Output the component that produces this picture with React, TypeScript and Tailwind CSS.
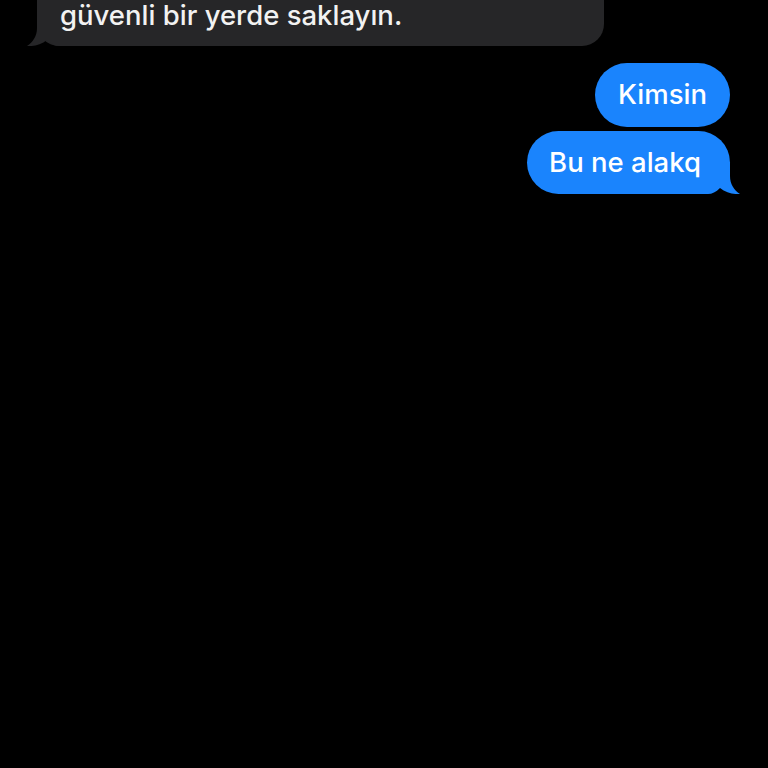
const font = { fontFamily: "Inter, 'Noto Sans', sans-serif" };

function Tail({ side, color }: { side: "left" | "right"; color: string }) {
  if (side === "left") {
    return (
      <svg className="absolute -left-[10px] bottom-0" width="42" height="32" viewBox="0 0 42 32">
        <path d="M42 0 H10 V14 C10 22 6 28 0 32 C6 32.5 14 31 20 26 C24 30 28 32 32 32 H42 Z" fill={color} />
      </svg>
    );
  }
  return (
    <svg className="absolute -right-[10px] bottom-0" width="42" height="32" viewBox="0 0 42 32">
      <path d="M0 0 H32 V14 C32 22 36 28 42 32 C36 32.5 28 31 22 26 C18 30 14 32 10 32 H0 Z" fill={color} />
    </svg>
  );
}

export default function App() {
  return (
    <div className="w-[768px] h-[768px] bg-black overflow-hidden text-white" style={font}>
      <div className="flex flex-col">
        <div className="pl-[37px]">
          <div className="relative w-[567px] -mt-[40px] bg-[#262628] rounded-[22px] pl-[23px] pr-4 pt-[41px] pb-[17px]">
            <p className="relative z-10 text-[27.5px] font-medium leading-[28px] text-[#f2f2f2]">güvenli bir yerde saklayın.</p>
            <Tail side="left" color="#262628" />
          </div>
        </div>

        <div className="flex flex-col items-end gap-[4px] pr-[38px] mt-[17px]">
          <div className="h-[64px] rounded-[32px] bg-[#1a84fd] px-[23px] flex items-center">
            <span className="text-[27.5px] font-medium">Kimsin</span>
          </div>
          <div className="relative h-[63px] rounded-[32px] bg-[#1a84fd] pl-[22px] pr-[29px] flex items-center">
            <span className="relative z-10 text-[27.5px] font-medium">Bu ne alakq</span>
            <Tail side="right" color="#1a84fd" />
          </div>
        </div>
      </div>
    </div>
  );
}
